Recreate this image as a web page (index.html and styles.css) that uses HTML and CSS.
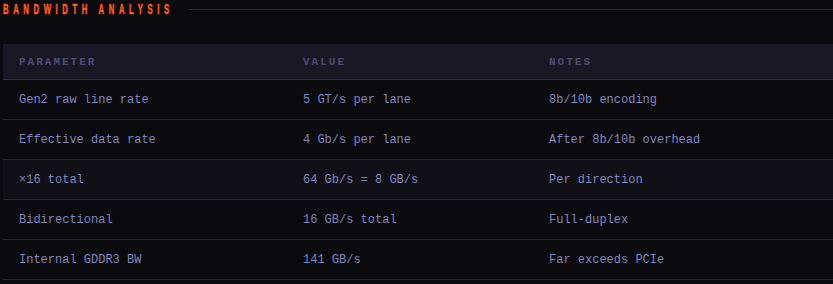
FILE: index.html
```html
<!DOCTYPE html>
<html>
<head>
<meta charset="utf-8">
<link rel="stylesheet" href="styles.css">
</head>
<body>
<section class="panel">
  <div class="title-row">
    <h2 class="title"><span class="title-text">BANDWIDTH ANALYSIS</span></h2>
    <div class="rule"></div>
  </div>
  <table class="grid">
    <thead>
      <tr><th class="c1">PARAMETER</th><th class="c2">VALUE</th><th class="c3">NOTES</th></tr>
    </thead>
    <tbody>
      <tr><td>Gen2 raw line rate</td><td>5 GT/s per lane</td><td>8b/10b encoding</td></tr>
      <tr><td>Effective data rate</td><td>4 Gb/s per lane</td><td>After 8b/10b overhead</td></tr>
      <tr class="hl"><td>×16 total</td><td>64 Gb/s = 8 GB/s</td><td>Per direction</td></tr>
      <tr><td>Bidirectional</td><td>16 GB/s total</td><td>Full-duplex</td></tr>
      <tr><td>Internal GDDR3 BW</td><td>141 GB/s</td><td>Far exceeds PCIe</td></tr>
    </tbody>
  </table>
</section>
</body>
</html>
```
FILE: styles.css
```css
html, body {
  margin: 0;
  padding: 0;
  background: #0b0a0f;
}
.panel {
  padding: 0 0 0 3px;
}
.title-row {
  display: flex;
  align-items: center;
  gap: 14px;
  height: 19px;
  margin-bottom: 25px;
}
.title {
  margin: 0;
  width: 172px;
  flex: none;
  font-family: "Liberation Sans", Arial, sans-serif;
  font-weight: bold;
  font-size: 14px;
  line-height: 19px;
  color: #ff5a1f;
  white-space: nowrap;
}
.title-text {
  display: inline-block;
  letter-spacing: 8.4px;
  -webkit-text-stroke: 0.6px #ff5a1f;
  transform: scaleX(0.55);
  transform-origin: left center;
}
.rule {
  flex: 1;
  height: 1px;
  background: #2e2a3d;
}
.grid {
  width: 830px;
  border-collapse: collapse;
  font-family: "Liberation Mono", "DejaVu Sans Mono", monospace;
  font-size: 12px;
  color: #7f87bc;
}
.grid th {
  background: #1b1825;
  height: 35px;
  padding: 0 16px;
  text-align: left;
  font-size: 11px;
  font-weight: bold;
  letter-spacing: 2px;
  color: #4f4b75;
  border-bottom: 1px solid #34304a;
}
.grid th.c1 { width: 252px; }
.grid th.c2 { width: 214px; }
.grid td {
  height: 39px;
  padding: 0 16px;
  border-bottom: 1px solid #2a2738;
  white-space: nowrap;
}
.grid tr.hl td {
  background: #111017;
}
```
